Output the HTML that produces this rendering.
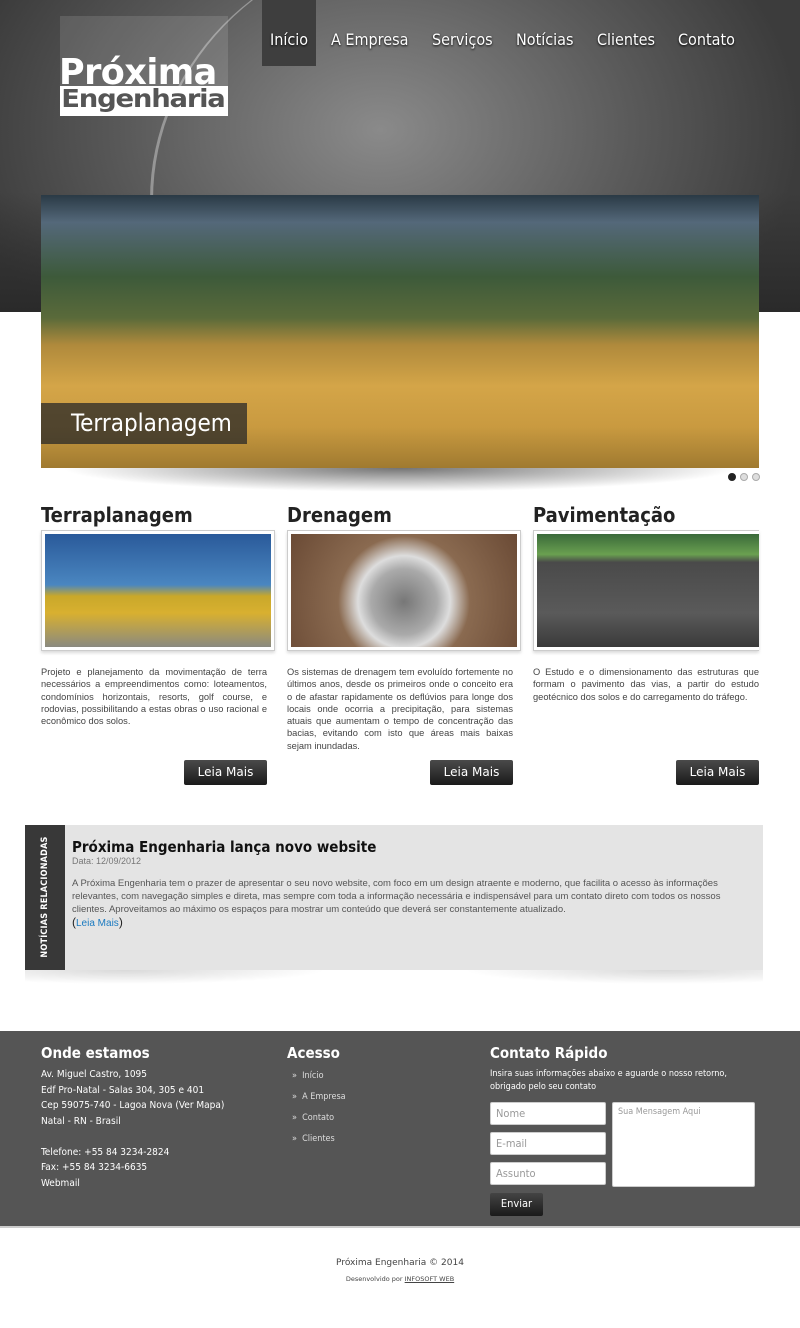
<!DOCTYPE html>
<html><head><meta charset="utf-8"><style>
*{margin:0;padding:0;box-sizing:border-box}
body{width:800px;height:1328px;background:#fff;font-family:"Liberation Sans",sans-serif;position:relative;overflow:hidden}
.hdr{position:absolute;left:0;top:0;width:800px;height:312px;background:radial-gradient(ellipse 420px 300px at 380px 130px,#8a8a8a,#5a5a5a 60%,#3c3c3c 100%);}
.hdr:after{content:"";position:absolute;left:0;right:0;bottom:0;height:120px;background:linear-gradient(#0000,#2a2a2a)}
.arc{position:absolute;left:150px;top:-60px;width:560px;height:520px;border-radius:50%;border-left:3px solid rgba(255,255,255,.35);}
.logobg{position:absolute;left:60px;top:16px;width:168px;height:100px;background:rgba(255,255,255,.12)}
.logo1{position:absolute;left:59px;top:52px;color:#fff;font:bold 36px "DejaVu Sans Condensed","DejaVu Sans",sans-serif;letter-spacing:-0.5px;transform:scaleX(1.08);transform-origin:left}
.logo2{position:absolute;left:60px;top:86px;width:168px;height:30px;background:#fff;overflow:hidden}
.logo2 span{display:block;color:#555;font:bold 25px "DejaVu Sans Condensed",sans-serif;line-height:26px;letter-spacing:-1px;padding-left:1px;transform:scaleX(1.22);transform-origin:left}
.nav{position:absolute;top:30px;left:270px;color:#fff;font:16px "DejaVu Sans Condensed","DejaVu Sans",sans-serif;text-shadow:0 1px 2px #000}
.nav span{position:absolute;white-space:nowrap}
.act{position:absolute;left:262px;top:0;width:54px;height:66px;background:#3e3e3e}
.hero{position:absolute;left:41px;top:195px;width:718px;height:273px;background:linear-gradient(#2a3a45 0%,#54687a 10%,#3d5a3a 30%,#5a6a3a 45%,#b08a3c 55%,#d4a548 70%,#c99a40 85%,#a07a30 100%)}
.cap{position:absolute;left:41px;top:403px;width:206px;height:41px;background:rgba(40,40,40,.75);color:#fff;font:24px "DejaVu Sans Condensed",sans-serif;padding:6px 0 0 30px}
.shadow{position:absolute;left:60px;top:468px;width:680px;height:24px;background:radial-gradient(ellipse at top,rgba(0,0,0,.55),transparent 70%)}
.dot{position:absolute;top:473px;width:8px;height:8px;border-radius:50%;background:#ddd;border:1px solid #aaa}
.col{position:absolute;top:503px;width:226px}
.col h2{font:bold 20px "DejaVu Sans Condensed","DejaVu Sans",sans-serif;color:#222;height:27px}
.img{width:234px;height:121px;border:1px solid #ccc;padding:3px;background:#fff;box-shadow:0 2px 3px rgba(0,0,0,.15)}
.img div{width:100%;height:100%}
.col p{font:9.3px/12.3px "Liberation Sans",sans-serif;color:#444;text-align:justify;margin-top:15px}
.btn{position:absolute;top:760px;width:83px;height:25px;background:linear-gradient(#4a4a4a,#1a1a1a);color:#fff;font:12px "DejaVu Sans",sans-serif;text-align:center;line-height:24px;border-radius:2px}
.news{position:absolute;left:25px;top:825px;width:738px;height:145px;background:#e4e4e4}
.news .side{position:absolute;left:0;top:0;width:40px;height:145px;background:#383838}
.news .side span{position:absolute;left:20px;top:72px;transform:translate(-50%,-50%) rotate(-90deg);color:#fff;font:bold 9px "DejaVu Sans Condensed",sans-serif;white-space:nowrap;letter-spacing:.2px}
.news h3{position:absolute;left:47px;top:13px;font:bold 15px "DejaVu Sans Condensed","DejaVu Sans",sans-serif;color:#111}
.news .d{position:absolute;left:47px;top:31px;font:9px "Liberation Sans";color:#777}
.news p{position:absolute;left:47px;top:52px;width:680px;font:9.5px/13px "Liberation Sans";color:#555}
.foot{position:absolute;left:0;top:1031px;width:800px;height:195px;background:#555}
.ft{position:absolute;color:#fff;font:10px/15.5px "DejaVu Sans Condensed","DejaVu Sans",sans-serif}
.acc{position:absolute;left:292px;color:#ddd;font:9px "DejaVu Sans Condensed",sans-serif}
.in{position:absolute;background:#fff;border:1px solid #ccc;border-radius:2px;color:#999;font:11px "DejaVu Sans Condensed",sans-serif;padding:4px 5px}
.fh{position:absolute;top:1044px;color:#fff;font:bold 15px "DejaVu Sans Condensed","DejaVu Sans",sans-serif}
</style></head><body>
<div class="hdr"></div>
<div class="arc"></div>
<div class="logobg"></div>
<div class="act"></div>
<div class="logo1">Próxima</div>
<div class="logo2"><span>Engenharia</span></div>
<div class="nav"><span style="left:0">Início</span><span style="left:61px">A Empresa</span><span style="left:162px">Serviços</span><span style="left:246px">Notícias</span><span style="left:327px">Clientes</span><span style="left:408px">Contato</span></div>
<div class="shadow"></div>
<div class="hero"></div>
<div class="cap">Terraplanagem</div>
<div class="dot" style="left:728px;background:#222;border-color:#222"></div><div class="dot" style="left:740px"></div><div class="dot" style="left:752px"></div>

<div class="col" style="left:41px"><h2>Terraplanagem</h2><div class="img"><div style="background:linear-gradient(#2a5a9a,#4a86c0 45%,#c9a82a 55%,#d8b030 70%,#8a8a80 100%)"></div></div>
<p>Projeto e planejamento da movimentação de terra necessários a empreendimentos como: loteamentos, condomínios horizontais, resorts, golf course, e rodovias, possibilitando a estas obras o uso racional e econômico dos solos.</p></div>
<div class="col" style="left:287px"><h2>Drenagem</h2><div class="img"><div style="background:radial-gradient(circle at 50% 60%,#777 0,#aaa 25%,#ddd 35%,#8a6a50 50%,#6a4a35 100%)"></div></div>
<p>Os sistemas de drenagem tem evoluído fortemente no últimos anos, desde os primeiros onde o conceito era o de afastar rapidamente os deflúvios para longe dos locais onde ocorria a precipitação, para sistemas atuais que aumentam o tempo de concentração das bacias, evitando com isto que áreas mais baixas sejam inundadas.</p></div>
<div class="col" style="left:533px"><h2>Pavimentação</h2><div class="img" style="width:226px;border-right:none;padding-right:0"><div style="background:linear-gradient(#3a6a3a,#6aa050 18%,#4a4a4a 25%,#5a5a5a 70%,#3a3a3a 100%)"></div></div>
<p>O Estudo e o dimensionamento das estruturas que formam o pavimento das vias, a partir do estudo geotécnico dos solos e do carregamento do tráfego.</p></div>
<div class="btn" style="left:184px">Leia Mais</div><div class="btn" style="left:430px">Leia Mais</div><div class="btn" style="left:676px">Leia Mais</div>

<div style="position:absolute;left:25px;top:970px;width:738px;height:30px;background:radial-gradient(ellipse 200px 14px at 100px 0,rgba(0,0,0,.15),transparent),radial-gradient(ellipse 200px 14px at 640px 0,rgba(0,0,0,.15),transparent)"></div>
<div class="news"><div class="side"><span>NOTÍCIAS RELACIONADAS</span></div>
<h3>Próxima Engenharia lança novo website</h3><div class="d">Data: 12/09/2012</div>
<p>A Próxima Engenharia tem o prazer de apresentar o seu novo website, com foco em um design atraente e moderno, que facilita o acesso às informações relevantes, com navegação simples e direta, mas sempre com toda a informação necessária e indispensável para um contato direto com todos os nossos clientes. Aproveitamos ao máximo os espaços para mostrar um conteúdo que deverá ser constantemente atualizado.<br><span style="font-size:12px;color:#222">(<span style="color:#1a7ac0;font-size:10px">Leia Mais</span>)</span></p></div>

<div class="foot"></div>
<div class="fh" style="left:41px">Onde estamos</div>
<div class="fh" style="left:287px">Acesso</div>
<div class="fh" style="left:490px">Contato Rápido</div>
<div class="ft" style="left:41px;top:1067px">Av. Miguel Castro, 1095<br>Edf Pro-Natal - Salas 304, 305 e 401<br>Cep 59075-740 - Lagoa Nova (Ver Mapa)<br>Natal - RN - Brasil<br><br>Telefone: +55 84 3234-2824<br>Fax: +55 84 3234-6635<br>Webmail</div>
<div class="acc" style="top:1071px">»&nbsp; Início</div><div class="acc" style="top:1092px">»&nbsp; A Empresa</div><div class="acc" style="top:1113px">»&nbsp; Contato</div><div class="acc" style="top:1134px">»&nbsp; Clientes</div>
<div class="ft" style="left:490px;top:1068px;font-size:9px;line-height:13px">Insira suas informações abaixo e aguarde o nosso retorno,<br>obrigado pelo seu contato</div>
<div class="in" style="left:490px;top:1102px;width:116px;height:23px">Nome</div>
<div class="in" style="left:490px;top:1132px;width:116px;height:23px">E-mail</div>
<div class="in" style="left:490px;top:1162px;width:116px;height:23px">Assunto</div>
<div class="in" style="left:612px;top:1102px;width:143px;height:85px;font-size:9px">Sua Mensagem Aqui</div>
<div style="position:absolute;left:490px;top:1193px;width:53px;height:23px;background:linear-gradient(#444,#1a1a1a);color:#fff;font:11px 'DejaVu Sans Condensed',sans-serif;text-align:center;line-height:22px;border-radius:2px">Enviar</div>
<div style="position:absolute;left:0;top:1226px;width:800px;height:2px;background:#ccc"></div>
<div style="position:absolute;left:0;top:1258px;width:800px;text-align:center;font:9px 'DejaVu Sans',sans-serif;color:#444">Próxima Engenharia © 2014</div>
<div style="position:absolute;left:0;top:1275px;width:800px;text-align:center;font:6.5px 'DejaVu Sans',sans-serif;color:#444">Desenvolvido por <u>INFOSOFT WEB</u></div>
</body></html>
